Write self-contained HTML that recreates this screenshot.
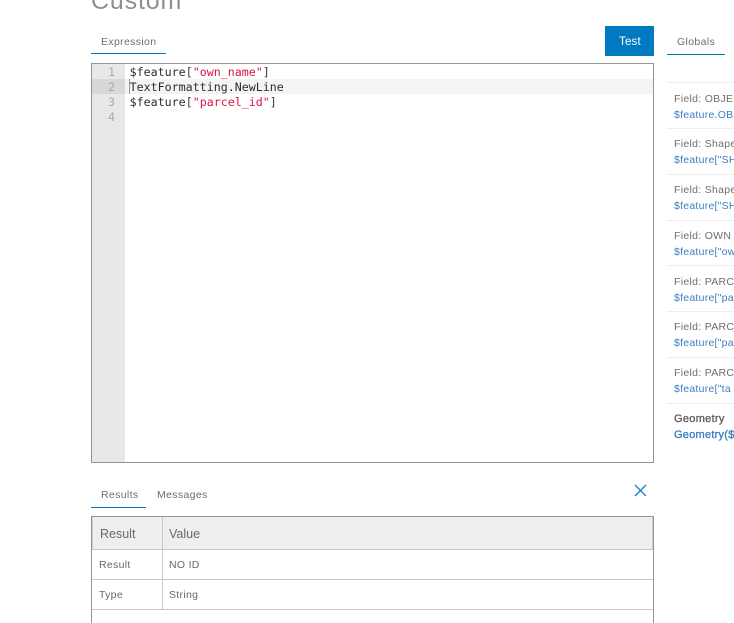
<!DOCTYPE html>
<html>
<head>
<meta charset="utf-8">
<style>
html,body{margin:0;padding:0;background:#fff;width:734px;height:623px;overflow:hidden;}
#w{width:734px;height:623px;position:relative;overflow:hidden;font-family:"Liberation Sans",sans-serif;color:#6a6a6a;}
.a{position:absolute;white-space:nowrap;}
.r{position:absolute;}
.code{font-family:"DejaVu Sans Mono","Liberation Mono",monospace;font-size:11.65px;line-height:15px;color:#2c2c2c;left:129.6px;}
.code i{font-style:normal;color:#dc1445;}
.code b{font-weight:normal;color:#4a3a30;}
.num{font-family:"DejaVu Sans Mono","Liberation Mono",monospace;font-size:11.65px;line-height:15px;color:#aaa;left:108px;}
.tab{font-size:10.5px;line-height:14px;color:#6e6e6e;letter-spacing:.35px;}
.f{font-size:10.5px;line-height:14px;color:#6e6e6e;left:674px;letter-spacing:.3px;}
.v{font-size:10.5px;line-height:14px;color:#3b7fc0;left:674px;letter-spacing:.25px;}
.sep{position:absolute;left:667px;width:67px;height:1px;background:#eee;}
.cell{font-size:10.5px;line-height:14px;color:#6a6a6a;letter-spacing:.3px;}
.h{font-size:12.5px;line-height:16px;color:#6a6a6a;}
</style>
</head>
<body>
<div id="w">
<div class="a" style="left:91px;top:-13px;font-size:25px;line-height:28px;color:#8f8f8f;letter-spacing:.85px;">Custom</div>

<div class="a tab" style="left:101px;top:35px;">Expression</div>
<div class="r" style="left:91px;top:53px;width:75px;height:1px;background:#0079c1;"></div>

<div class="r" style="left:605px;top:26px;width:49px;height:30px;background:#0079c1;"></div>
<div class="a" style="left:619px;top:35px;font-size:11.5px;line-height:14px;color:#fff;letter-spacing:.2px;">Test</div>

<div class="a tab" style="left:677px;top:35px;">Globals</div>
<div class="r" style="left:667px;top:54px;width:58px;height:1px;background:#0079c1;"></div>

<!-- editor -->
<div class="r" style="left:91px;top:63px;width:561px;height:398px;border:1px solid #959595;background:#fff;"></div>
<div class="r" style="left:92px;top:64px;width:33px;height:398px;background:#e8e8e8;"></div>
<div class="r" style="left:92px;top:79px;width:33px;height:15px;background:#d8d8d8;"></div>
<div class="r" style="left:125px;top:79px;width:528px;height:15px;background:#f4f4f4;"></div>
<div class="r" style="left:129px;top:79px;width:1px;height:15px;background:#999;"></div>
<div class="a num" style="top:65px;">1</div>
<div class="a num" style="top:80px;">2</div>
<div class="a num" style="top:95px;">3</div>
<div class="a num" style="top:110px;">4</div>
<div class="a code" style="top:65px;">$feature<b>[</b><i>"own_name"</i><b>]</b></div>
<div class="a code" style="top:80px;">TextFormatting.NewLine</div>
<div class="a code" style="top:95px;">$feature<b>[</b><i>"parcel_id"</i><b>]</b></div>

<!-- globals list -->
<div class="sep" style="top:82px;"></div>
<div class="a f" style="top:92px;">Field: OBJE</div>
<div class="a v" style="top:108px;">$feature.OB</div>
<div class="sep" style="top:128px;"></div>
<div class="a f" style="top:137px;">Field: Shape</div>
<div class="a v" style="top:153px;">$feature["SH</div>
<div class="sep" style="top:174px;"></div>
<div class="a f" style="top:183px;">Field: Shape</div>
<div class="a v" style="top:199px;">$feature["SH</div>
<div class="sep" style="top:220px;"></div>
<div class="a f" style="top:229px;">Field: OWN</div>
<div class="a v" style="top:245px;">$feature["ow</div>
<div class="sep" style="top:265px;"></div>
<div class="a f" style="top:275px;">Field: PARC</div>
<div class="a v" style="top:291px;">$feature["pa</div>
<div class="sep" style="top:311px;"></div>
<div class="a f" style="top:320px;">Field: PARC</div>
<div class="a v" style="top:336px;">$feature["pa</div>
<div class="sep" style="top:357px;"></div>
<div class="a f" style="top:366px;">Field: PARC</div>
<div class="a v" style="top:382px;">$feature["ta</div>
<div class="sep" style="top:403px;"></div>
<div class="a f" style="top:412px;font-size:11px;color:#5f5f5f;-webkit-text-stroke:.35px #5f5f5f;">Geometry</div>
<div class="a v" style="top:428px;font-size:11px;color:#3b7fc0;-webkit-text-stroke:.35px #3b7fc0;">Geometry($</div>

<!-- results tabs -->
<div class="a tab" style="left:101px;top:488px;">Results</div>
<div class="r" style="left:91px;top:507px;width:55px;height:1px;background:#0079c1;"></div>
<div class="a tab" style="left:157px;top:488px;">Messages</div>
<svg class="r" style="left:634px;top:484px;" width="13" height="13" viewBox="0 0 13 13"><path d="M1 1L12 12M12 1L1 12" stroke="#1a85c8" stroke-width="1.4" fill="none"/></svg>

<!-- results table -->
<div class="r" style="left:91px;top:516px;width:561px;height:107px;border:1px solid #959595;border-bottom:none;"></div>
<div class="r" style="left:92px;top:517px;width:561px;height:32px;background:#eee;box-shadow:inset 1px 0 #ccc,inset -1px 0 #ccc;"></div>
<div class="r" style="left:92px;top:549px;width:561px;height:1px;background:#c8c8c8;"></div>
<div class="r" style="left:92px;top:579px;width:561px;height:1px;background:#c8c8c8;"></div>
<div class="r" style="left:92px;top:609px;width:561px;height:1px;background:#c8c8c8;"></div>
<div class="r" style="left:162px;top:517px;width:1px;height:92px;background:#c8c8c8;"></div>
<div class="a h" style="left:100px;top:526px;">Result</div>
<div class="a h" style="left:169px;top:526px;">Value</div>
<div class="a cell" style="left:99px;top:558px;">Result</div>
<div class="a cell" style="left:169px;top:558px;">NO ID</div>
<div class="a cell" style="left:99px;top:588px;">Type</div>
<div class="a cell" style="left:169px;top:588px;">String</div>
</div>
</body>
</html>
